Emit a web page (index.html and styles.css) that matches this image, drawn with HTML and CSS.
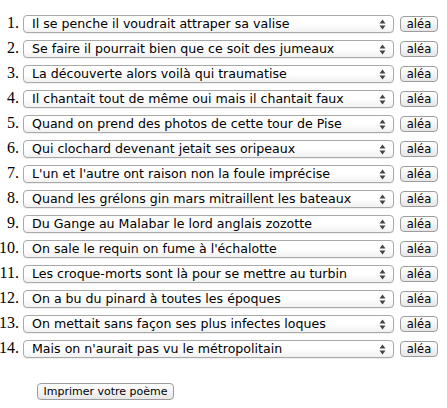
FILE: index.html
```html
<!DOCTYPE html>
<html lang="fr">
<head>
<meta charset="utf-8">
<title>Poème</title>
<link rel="stylesheet" href="styles.css">
</head>
<body>
<form class="poem">
<ol class="verses">
<li><div class="row"><select class="verse"><option>Il se penche il voudrait attraper sa valise</option></select><button type="button" class="alea">aléa</button></div></li>
<li><div class="row"><select class="verse"><option>Se faire il pourrait bien que ce soit des jumeaux</option></select><button type="button" class="alea">aléa</button></div></li>
<li><div class="row"><select class="verse"><option>La découverte alors voilà qui traumatise</option></select><button type="button" class="alea">aléa</button></div></li>
<li><div class="row"><select class="verse"><option>Il chantait tout de même oui mais il chantait faux</option></select><button type="button" class="alea">aléa</button></div></li>
<li><div class="row"><select class="verse"><option>Quand on prend des photos de cette tour de Pise</option></select><button type="button" class="alea">aléa</button></div></li>
<li><div class="row"><select class="verse"><option>Qui clochard devenant jetait ses oripeaux</option></select><button type="button" class="alea">aléa</button></div></li>
<li><div class="row"><select class="verse"><option>L'un et l'autre ont raison non la foule imprécise</option></select><button type="button" class="alea">aléa</button></div></li>
<li><div class="row"><select class="verse"><option>Quand les grélons gin mars mitraillent les bateaux</option></select><button type="button" class="alea">aléa</button></div></li>
<li><div class="row"><select class="verse"><option>Du Gange au Malabar le lord anglais zozotte</option></select><button type="button" class="alea">aléa</button></div></li>
<li><div class="row"><select class="verse"><option>On sale le requin on fume à l'échalotte</option></select><button type="button" class="alea">aléa</button></div></li>
<li><div class="row"><select class="verse"><option>Les croque-morts sont là pour se mettre au turbin</option></select><button type="button" class="alea">aléa</button></div></li>
<li><div class="row"><select class="verse"><option>On a bu du pinard à toutes les époques</option></select><button type="button" class="alea">aléa</button></div></li>
<li><div class="row"><select class="verse"><option>On mettait sans façon ses plus infectes loques</option></select><button type="button" class="alea">aléa</button></div></li>
<li><div class="row"><select class="verse"><option>Mais on n'aurait pas vu le métropolitain</option></select><button type="button" class="alea">aléa</button></div></li>
</ol>
<button type="button" class="print">Imprimer votre poème</button>
</form>
</body>
</html>
```
FILE: styles.css
```css
html, body {
  margin: 0;
  padding: 0;
  background: #fff;
}
.poem {
  padding: 12px 8px;
}
.verses {
  margin: 0 0 19px 0;
  padding: 0 0 0 15px;
  font-family: "Liberation Serif", "Times New Roman", serif;
  font-size: 16px;
  color: #000;
}
.verses li {
  height: 25px;
}
.row {
  display: flex;
  align-items: flex-start;
  padding-top: 3px;
  gap: 6px;
}
.verse {
  -webkit-appearance: none;
  appearance: none;
  width: 371px;
  height: 18px;
  margin: 0;
  padding: 0 20px 0 8px;
  border: 1px solid #a9a9a9;
  border-radius: 4px;
  font-family: "DejaVu Sans", "Lucida Grande", sans-serif;
  font-size: 12.6px;
  line-height: 16px;
  color: #000;
  background-color: #fff;
  background-image:
    url("data:image/svg+xml,%3Csvg xmlns='http://www.w3.org/2000/svg' width='7' height='11'%3E%3Cpath d='M3.5 0.5 L6.5 4.5 L0.5 4.5 Z M3.5 10.5 L6.5 6.5 L0.5 6.5 Z' fill='%23444'/%3E%3C/svg%3E"),
    linear-gradient(#ffffff, #ffffff 50%, #f1f1f1);
  background-repeat: no-repeat, no-repeat;
  background-position: right 7px center, 0 0;
  box-shadow: 0 1px 0 rgba(0,0,0,0.06);
}
.alea {
  margin: 1px 0 0 0;
  height: 16px;
  width: 38px;
  padding: 0;
  border: 1px solid #9c9c9c;
  border-radius: 4px;
  background: linear-gradient(#ffffff, #f4f4f4 50%, #e6e6e6);
  font-family: "DejaVu Sans", "Lucida Grande", sans-serif;
  font-size: 11.5px;
  line-height: 14px;
  color: #000;
}
.print {
  margin: 0 0 0 29px;
  width: 137px;
  height: 17px;
  padding: 0;
  border: 1px solid #9c9c9c;
  border-radius: 4px;
  background: linear-gradient(#ffffff, #f4f4f4 50%, #e6e6e6);
  font-family: "DejaVu Sans", "Lucida Grande", sans-serif;
  font-size: 11px;
  line-height: 15px;
  color: #000;
}
```
